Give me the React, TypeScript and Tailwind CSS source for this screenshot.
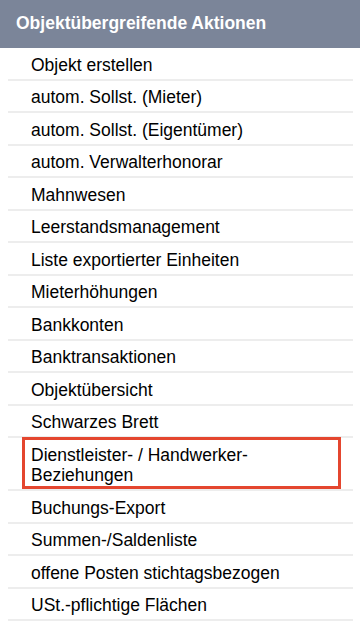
import React from 'react';

const items: string[] = [
  'Objekt erstellen',
  'autom. Sollst. (Mieter)',
  'autom. Sollst. (Eigentümer)',
  'autom. Verwalterhonorar',
  'Mahnwesen',
  'Leerstandsmanagement',
  'Liste exportierter Einheiten',
  'Mieterhöhungen',
  'Bankkonten',
  'Banktransaktionen',
  'Objektübersicht',
  'Schwarzes Brett',
  'Dienstleister- / Handwerker-Beziehungen',
  'Buchungs-Export',
  'Summen-/Saldenliste',
  'offene Posten stichtagsbezogen',
  'USt.-pflichtige Flächen',
];

export default function App(): React.JSX.Element {
  return (
    <div className="w-[360px] h-[628px] bg-white overflow-hidden font-['Liberation_Sans',Arial,sans-serif] text-black">
      {/* Header */}
      <div className="h-12 bg-[#7b8599] flex items-center px-4 pb-[2px]">
        <h2 className="text-white font-bold text-[17.5px] leading-6">Objektübergreifende Aktionen</h2>
      </div>

      {/* Action list */}
      <ul className="ml-2 mr-[7px]">
        {items.map((label, index) => (
          <li
            key={label}
            className="relative border-b-2 border-[#ededed] pl-[23px] pr-8 pt-[6.5px] pb-[3.5px] text-[17.5px] leading-[20.5px]"
          >
            {label}
            {/* Highlight frame */}
            {index === 12 && (
              <span className="absolute left-[14px] right-[12px] -top-[1px] bottom-0 border-[3px] border-[#e4462f] pointer-events-none" />
            )}
          </li>
        ))}
      </ul>
    </div>
  );
}
